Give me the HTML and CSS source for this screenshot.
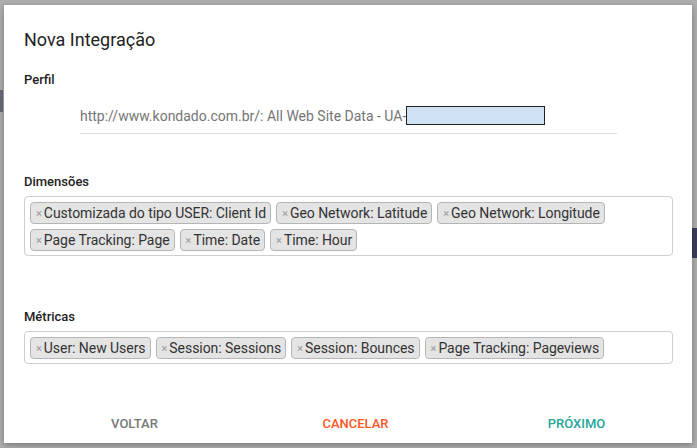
FILE: index.html
```html
<!DOCTYPE html>
<html lang="pt-BR">
<head>
    <meta charset="UTF-8" />
    <title>Nova Integração</title>
    <link rel="stylesheet" href="styles.css">
</head>

<body>
    <div class="backdrop-mark mark-left"></div>
    <div class="backdrop-mark mark-right"></div>

    <main class="modal" role="dialog" aria-label="Nova Integração">
        <h1 class="modal-title">Nova Integração</h1>

        <section class="field">
            <h2 class="field-label">Perfil</h2>
            <div class="profile-input">
                http://www.kondado.com.br/: All Web Site Data - UA-<span class="redacted"></span>
            </div>
        </section>

        <section class="field field-dims">
            <h2 class="field-label">Dimensões</h2>
            <div class="tag-box">
                <span class="tag"><span class="tag-x">×</span>Customizada do tipo USER: Client Id</span>
                <span class="tag"><span class="tag-x">×</span>Geo Network: Latitude</span>
                <span class="tag"><span class="tag-x">×</span>Geo Network: Longitude</span>
                <span class="tag"><span class="tag-x">×</span>Page Tracking: Page</span>
                <span class="tag"><span class="tag-x">×</span>Time: Date</span>
                <span class="tag"><span class="tag-x">×</span>Time: Hour</span>
            </div>
        </section>

        <section class="field field-metrics">
            <h2 class="field-label">Métricas</h2>
            <div class="tag-box">
                <span class="tag"><span class="tag-x">×</span>User: New Users</span>
                <span class="tag"><span class="tag-x">×</span>Session: Sessions</span>
                <span class="tag"><span class="tag-x">×</span>Session: Bounces</span>
                <span class="tag"><span class="tag-x">×</span>Page Tracking: Pageviews</span>
            </div>
        </section>

        <footer class="modal-footer">
            <button class="btn btn-back">Voltar</button>
            <button class="btn btn-cancel">Cancelar</button>
            <button class="btn btn-next">Próximo</button>
        </footer>
    </main>
</body>

</html>
```

FILE: styles.css
```css
* {
    box-sizing: border-box;
}

html,
body {
    margin: 0;
    height: 100%;
    font-family: Roboto, 'Liberation Sans', sans-serif;
    background: #adadad;
}

body {
    position: relative;
    padding: 5px 5px 0 4px;
    overflow: hidden;
}

.backdrop-mark {
    position: absolute;
    background: #3a3d5a;
}

.mark-left {
    left: 0;
    top: 90px;
    width: 3px;
    height: 22px;
    opacity: .6;
}

.mark-right {
    right: 0;
    top: 228px;
    width: 5px;
    height: 30px;
}

.modal {
    position: relative;
    width: 688px;
    height: 438px;
    background: #fff;
    padding: 23px 20px 0 20px;
    box-shadow: 0 2px 6px rgba(0, 0, 0, 0.3);
    display: flex;
    flex-direction: column;
}

.modal-title {
    margin: 0;
    font-size: 18px;
    line-height: 24px;
    font-weight: 400;
    color: #222;
}

.field-label {
    margin: 19px 0 0;
    font-size: 13px;
    line-height: 18px;
    font-weight: 500;
    color: #222;
}

.profile-input {
    margin: 17px 0 0 56px;
    width: 537px;
    font-size: 14px;
    line-height: 20px;
    color: #757575;
    padding-bottom: 7px;
    border-bottom: 1px solid #ddd;
    white-space: nowrap;
}

.redacted {
    display: inline-block;
    width: 139px;
    height: 19px;
    vertical-align: -4px;
    background: #cfe2f3;
    border: 1px solid #222;
}

.field-dims .field-label {
    margin-top: 39px;
}

.field-metrics .field-label {
    margin-top: 52px;
}

.tag-box {
    margin-top: 5px;
    width: 649px;
    border: 1px solid #cfcfcf;
    border-radius: 4px;
    padding: 5px 5px 4px;
    display: flex;
    flex-wrap: wrap;
    gap: 5px 5px;
}

.tag {
    display: inline-flex;
    align-items: center;
    height: 22px;
    padding: 0 4px 0 5px;
    background: #e4e4e4;
    border: 1px solid #b5b5b5;
    border-radius: 4px;
    font-size: 14px;
    letter-spacing: -0.05px;
    color: #333;
    white-space: nowrap;
}

.tag-x {
    font-size: 11px;
    color: #999;
    margin-right: 2px;
}

.modal-footer {
    margin-top: auto;
    height: 44px;
    margin-bottom: -2px;
    display: grid;
    grid-template-columns: repeat(3, 221px);
    align-items: center;
}

.btn {
    background: none;
    border: none;
    font-family: Roboto, 'Liberation Sans', sans-serif;
    font-size: 13px;
    font-weight: 500;
    text-transform: uppercase;
    cursor: pointer;
    padding: 0;
    justify-self: center;
}

.btn-back {
    color: #777;
}

.btn-cancel {
    color: #ff5722;
}

.btn-next {
    color: #26a69a;
}
```
